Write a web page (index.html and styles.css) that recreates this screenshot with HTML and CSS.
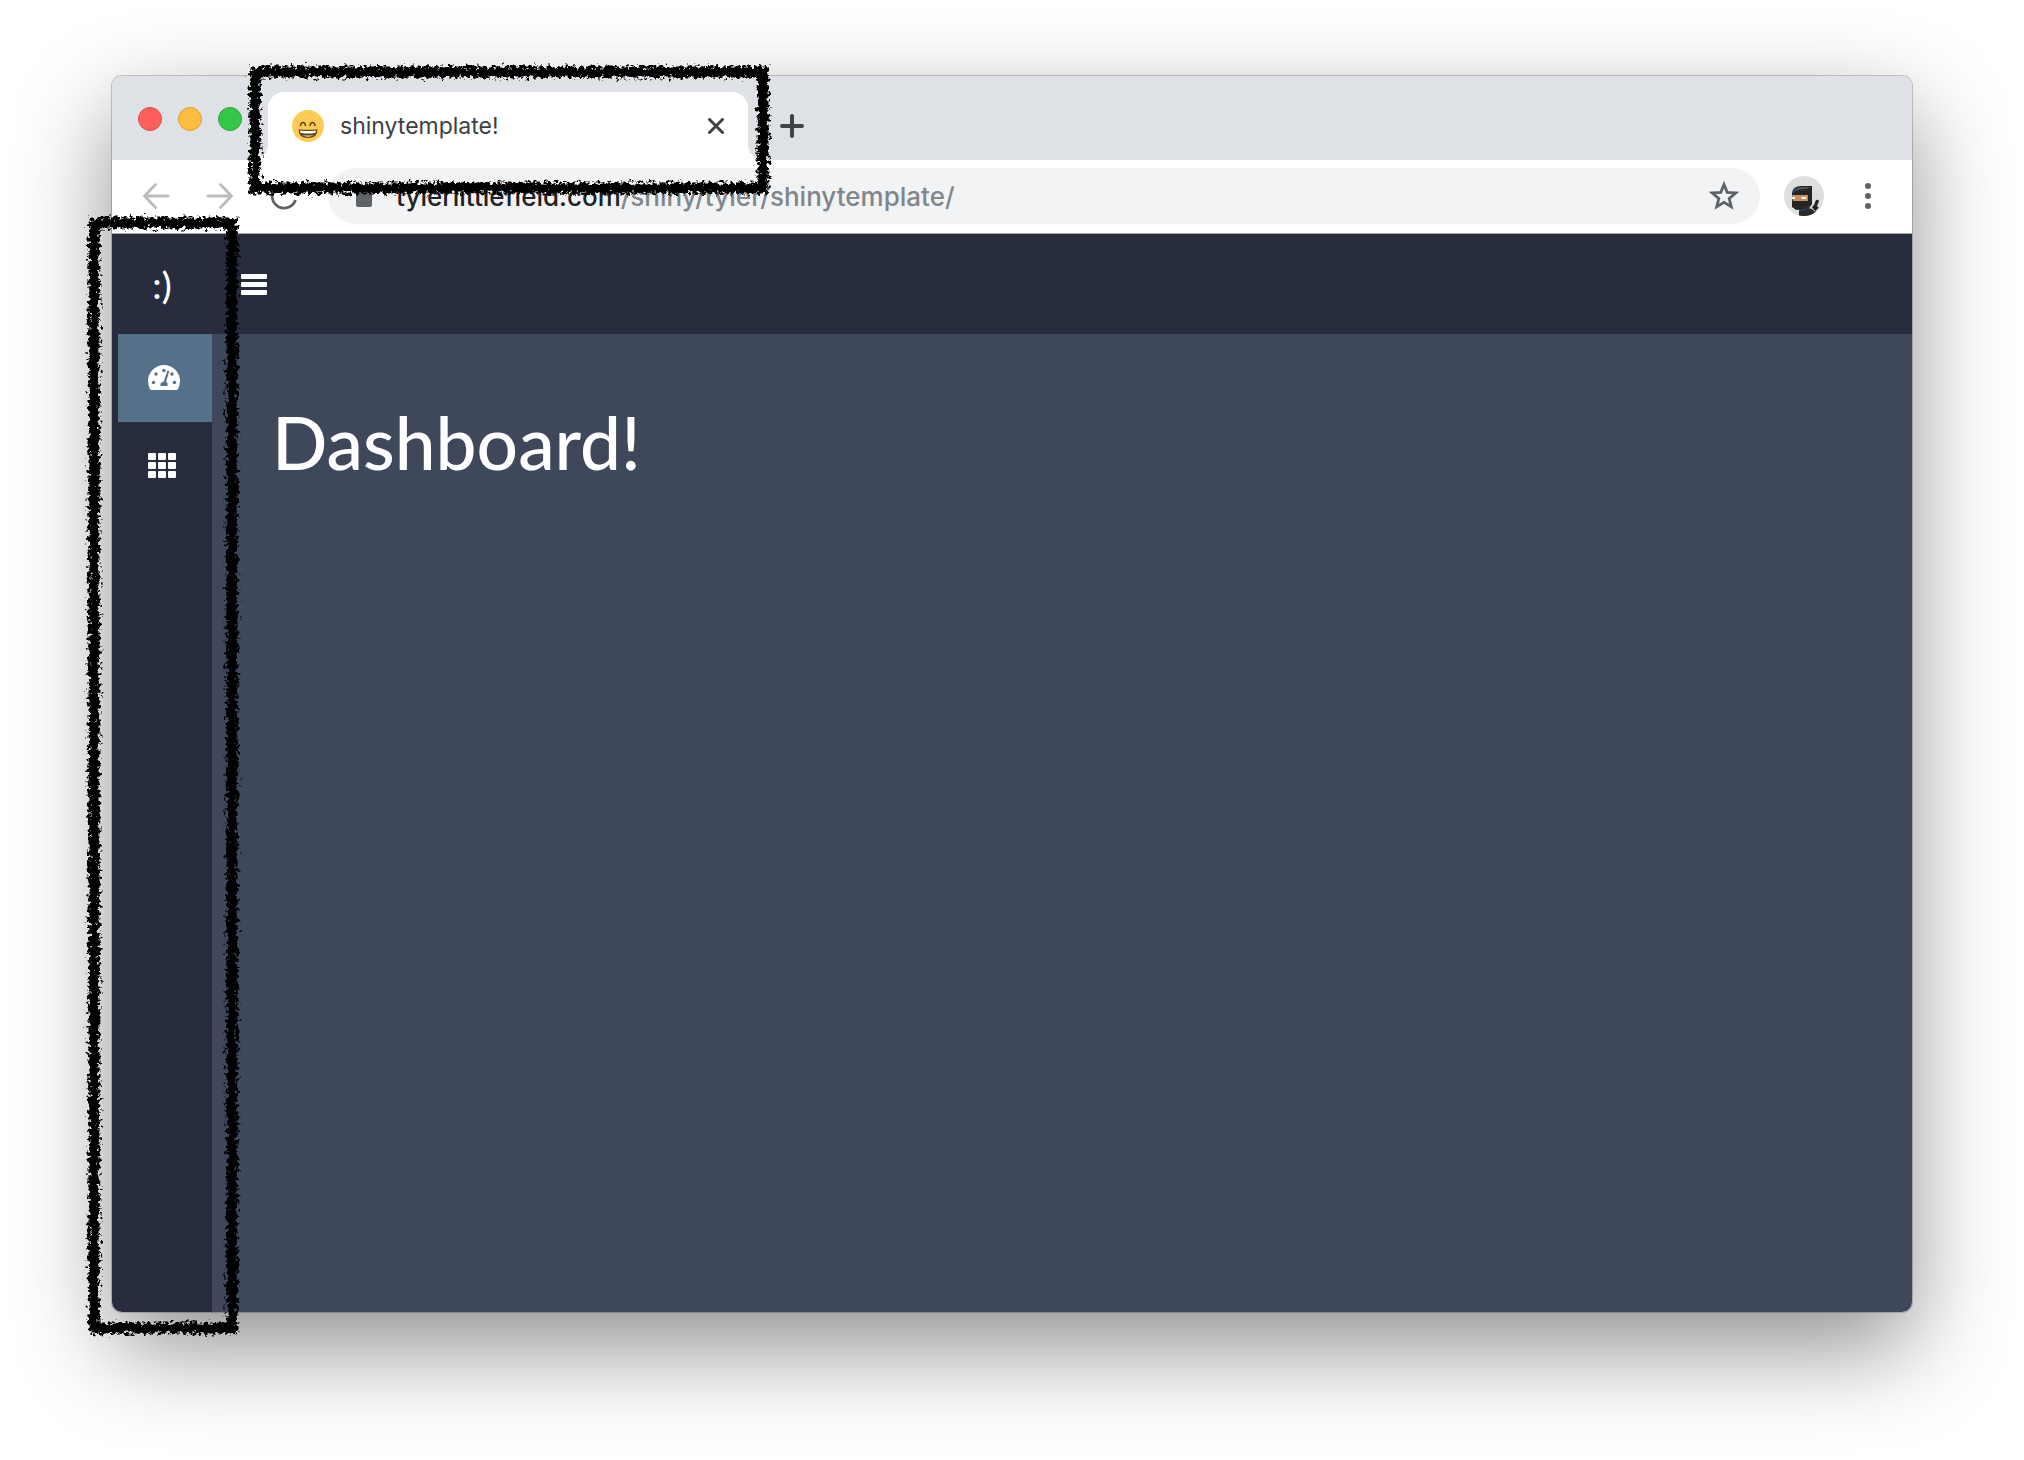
FILE: index.html
```html
<!DOCTYPE html>
<html lang="en">
<head>
<meta charset="utf-8">
<title>shinytemplate!</title>
<link rel="stylesheet" href="styles.css">
</head>
<body>
<svg class="defs" width="0" height="0" aria-hidden="true">
  <filter id="charcoal" filterUnits="userSpaceOnUse" x="-20" y="-20" width="2000" height="2000">
    <feTurbulence type="fractalNoise" baseFrequency="0.28" numOctaves="3" seed="4" result="noise"/>
    <feDisplacementMap in="SourceGraphic" in2="noise" scale="12" xChannelSelector="R" yChannelSelector="G"/>
  </filter>
</svg>
<div class="window">
  <header class="tabstrip">
    <div class="lights">
      <button class="light light-close" aria-label="Close window"></button>
      <button class="light light-min" aria-label="Minimize window"></button>
      <button class="light light-max" aria-label="Zoom window"></button>
    </div>
    <div class="tab">
      <svg class="favicon" viewBox="0 0 32 32" aria-hidden="true">
        <circle cx="16" cy="16" r="16" fill="#ffcb57"/>
        <path d="M8.5 15.500c.7-4 4.300-4 5 0M18 15.500c.7-4 4.300-4 5 0" fill="none" stroke="#664311" stroke-width="1.500" stroke-linecap="round"/>
        <path d="M6.500 19.200Q16 20.500 25.500 19.200Q25.500 28 16 28Q6.500 28 6.500 19.200Z" fill="#664311"/>
        <path d="M8 20.500Q16 21.700 24 20.500Q23.800 22.300 23 23Q16 24 9 23Q8.200 22 8 20.500Z" fill="#fff"/>
        <path d="M10.500 25Q16 26 21.500 25Q19.500 26.700 16 26.700Q12.500 26.700 10.500 25Z" fill="#f2e5cf"/>
      </svg>
      <span class="tab-title">shinytemplate!</span>
      <button class="icon-button tab-close" aria-label="Close tab">
        <svg width="16" height="16" viewBox="0 0 16 16"><path d="M1.500 1.500l13 13M14.500 1.500l-13 13" stroke="#3f4346" stroke-width="3" stroke-linecap="round"/></svg>
      </button>
    </div>
    <button class="icon-button new-tab" aria-label="New tab">
      <svg width="24" height="24" viewBox="0 0 24 24"><path d="M12 2v20M2 12h20" stroke="#3f4346" stroke-width="4" stroke-linecap="round"/></svg>
    </button>
    <div class="marker marker-tab"><svg aria-hidden="true"><rect width="100%" height="100%"/></svg></div>
  </header>
  <nav class="toolbar">
    <button class="icon-button" aria-label="Back">
      <svg width="32" height="32" viewBox="0 0 32 32"><path d="M28 16H4.500M15.500 4.500L4.500 16l11 11.500" fill="none" stroke="#babcbe" stroke-width="2.800" stroke-linecap="round"/></svg>
    </button>
    <button class="icon-button" aria-label="Forward">
      <svg width="32" height="32" viewBox="0 0 32 32"><path d="M4 16h23.500M16.500 4.500L27.500 16l-11 11.500" fill="none" stroke="#babcbe" stroke-width="2.800" stroke-linecap="round"/></svg>
    </button>
    <button class="icon-button" aria-label="Reload">
      <svg width="32" height="32" viewBox="0 0 32 32"><path d="M27.500 20A12 12 0 1 1 25 8l2 2M28 3v8h-8" fill="none" stroke="#5f6368" stroke-width="2.800"/></svg>
    </button>
    <div class="omnibox">
      <svg width="16" height="24" viewBox="0 0 16 24" aria-hidden="true"><rect y="8" width="16" height="15" rx="2" fill="#5f6368"/><path d="M4 9V6a4 4 0 0 1 8 0v3" fill="none" stroke="#5f6368" stroke-width="2"/></svg>
      <div class="address" role="textbox" contenteditable="true" spellcheck="false" aria-label="Address">tylerlittlefield.com<span class="path">/shiny/tyler/shinytemplate/</span></div>
      <button class="icon-button" aria-label="Bookmark this page">
        <svg width="32" height="32" viewBox="0 0 32 32"><path d="M16 4.500l3.200 7.900 8.600.6-6.600 5.500 2.100 8.300L16 22.300l-7.300 4.500 2.100-8.300L4.200 13l8.600-.6z" fill="none" stroke="#5f6368" stroke-width="2.800"/></svg>
      </button>
    </div>
    <button class="icon-button avatar" aria-label="Profile">
      <svg width="40" height="40" viewBox="0 0 40 40">
        <clipPath id="round"><circle cx="20" cy="20" r="20"/></clipPath>
        <g clip-path="url(#round)">
          <path d="M0 0h40v40H15V34L8 32H4L0 40z" fill="#dedede"/>
          <path d="M0 30l15 5v5H0z" fill="#dedede"/>
          <path d="M8 17Q9 10 17 10H28V28L24 34 12 34 8 31z" fill="#242424"/>
          <path d="M10 16Q12 11 18 11L27 11 22 13Q14 13 10 16z" fill="#555"/>
          <path d="M9 18Q9 12 15 11L10 17z" fill="#2f4a78"/>
          <path d="M8 19h16v6H9z" fill="#c79064"/>
          <path d="M8 21h3v2H8zM17 21h5v2h-4z" fill="#fff"/>
          <path d="M15 34l9-2 4 1 3 3-4 4H15z" fill="#292929"/>
          <path d="M13 33q7 4 13-4M29 37l3-2" stroke="#2f4a78" fill="none"/>
          <path d="M32 24q2-1 3 1l-2 5 2 2-2 1-1 2-2-1-2-3 2-2z" fill="#222"/>
        </g>
      </svg>
    </button>
    <button class="icon-button menu" aria-label="Menu">
      <svg width="8" height="28" viewBox="0 0 8 28"><g fill="#5f6368"><circle cx="4" cy="4" r="3"/><circle cx="4" cy="14" r="3"/><circle cx="4" cy="24" r="3"/></g></svg>
    </button>
  </nav>
  <div class="app">
    <aside class="sidebar">
      <a class="brand" href="#">:)</a>
      <a class="item item-active" href="#dashboard" aria-label="Dashboard">
        <svg width="32" height="26" viewBox="0 0 32 26"><path d="M16 0A16 16 0 0 0 0 16q0 4.500 2 8.200.6.800 1.600.8h24.800q1 0 1.600-.8 2-3.700 2-8.200A16 16 0 0 0 16 0z" fill="#fff"/><g fill="#557089"><circle cx="5.500" cy="17.500" r="1.700"/><circle cx="8" cy="9" r="1.700"/><circle cx="16" cy="5.500" r="1.700"/><circle cx="24" cy="9" r="1.700"/><circle cx="26.500" cy="17.500" r="1.700"/><path d="M19.500 5.500l1.800.6-3.300 11q2.500 1 1.300 3.900h-6.600q-1.300-3.600 3-4.300z"/></g></svg>
      </a>
      <a class="item" href="#widgets" aria-label="Widgets">
        <svg width="28" height="26" viewBox="0 0 28 26"><g fill="#fff"><rect width="8" height="7" rx="1"/><rect x="10" width="8" height="7" rx="1"/><rect x="20" width="8" height="7" rx="1"/><rect y="9" width="8" height="7" rx="1"/><rect x="10" y="9" width="8" height="7" rx="1"/><rect x="20" y="9" width="8" height="7" rx="1"/><rect y="18" width="8" height="7" rx="1"/><rect x="10" y="18" width="8" height="7" rx="1"/><rect x="20" y="18" width="8" height="7" rx="1"/></g></svg>
      </a>
    </aside>
    <div class="page">
      <div class="navbar">
        <button class="icon-button" aria-label="Toggle navigation">
          <svg width="26" height="22" viewBox="0 0 26 22"><g fill="#fff"><rect y="1" width="26" height="5" rx="1"/><rect y="9" width="26" height="5" rx="1"/><rect y="17" width="26" height="5" rx="1"/></g></svg>
        </button>
      </div>
      <main class="content"><h1>Dashboard!</h1></main>
    </div>
    <div class="marker marker-sidebar"><svg aria-hidden="true"><rect width="100%" height="100%"/></svg></div>
  </div>
</div>
</body>
</html>
```
FILE: styles.css
```css
* { box-sizing: border-box; }
body {
  margin: 0;
  min-height: 100vh;
  padding: 76px 112px 148px;
  display: flex;
  background: #fff;
  font-family: Inter, "Liberation Sans", sans-serif;
}
svg { display: block; flex: none; }
.defs { position: absolute; }
.window {
  flex: 1;
  min-width: 0;
  display: flex;
  flex-direction: column;
  border-radius: 10px;
  background: #fff;
  box-shadow: 0 0 0 1px rgba(0, 0, 0, .2), 0 36px 96px rgba(0, 0, 0, .44);
}
.icon-button {
  display: flex;
  align-items: center;
  justify-content: center;
  padding: 0;
  border: 0;
  background: none;
}

.tabstrip {
  position: relative;
  display: flex;
  align-items: flex-end;
  height: 84px;
  padding-left: 26px;
  border-radius: 10px 10px 0 0;
  background: #dee1e6;
}
.lights { display: flex; gap: 16px; padding-top: 2px; align-self: center; margin-right: 26px; }
.light { width: 24px; height: 24px; padding: 0; border: 1px solid; border-radius: 50%; }
.light-close { background: #fe5f58; border-color: #e24c46; }
.light-min { background: #febc40; border-color: #dfa033; }
.light-max { background: #33c748; border-color: #27a938; }
.tab {
  position: relative;
  display: flex;
  align-items: center;
  gap: 16px;
  width: 480px;
  height: 68px;
  padding: 0 24px;
  border-radius: 16px 16px 0 0;
  background: #fff;
}
.tab::before, .tab::after {
  content: "";
  position: absolute;
  bottom: 0;
  width: 16px;
  height: 16px;
}
.tab::before { right: 100%; background: radial-gradient(circle at 0 0, transparent 16px, #fff 16px); }
.tab::after { left: 100%; background: radial-gradient(circle at 100% 0, transparent 16px, #fff 16px); }
.favicon { width: 32px; height: 32px; }
.tab-title { flex: 1; font-size: 23px; color: #3c4043; }
.new-tab { width: 48px; height: 68px; margin-left: 20px; }

.toolbar {
  display: flex;
  align-items: center;
  gap: 32px;
  height: 74px;
  padding: 0 40px 2px 28px;
  border-bottom: 1px solid #a9abab;
}
.omnibox {
  flex: 1;
  display: flex;
  align-items: center;
  gap: 24px;
  height: 56px;
  margin-right: -8px;
  margin-left: -4px;
  padding: 0 20px 0 28px;
  border-radius: 28px;
  background: #f1f3f4;
}
.address { flex: 1; padding-top: 2px; font-size: 26px; font-weight: 500; color: #202124; white-space: nowrap; }
.path { color: #80868b; }
.menu { margin-left: 8px; }

.app { position: relative; flex: 1; display: flex; }
.sidebar {
  width: 100px;
  background: #272c3f;
  border-radius: 0 0 0 10px;
}
.brand {
  display: flex;
  align-items: center;
  justify-content: center;
  height: 100px;
  font: 500 37px Lato, sans-serif;
  color: #fff;
  text-decoration: none;
}
.item {
  display: flex;
  align-items: center;
  height: 88px;
  margin-left: 6px;
  padding-left: 30px;
}
.item-active { background: #557089; }
.page { flex: 1; display: flex; flex-direction: column; }
.navbar {
  display: flex;
  align-items: center;
  height: 100px;
  padding-left: 29px;
  background: #272c3f;
}
.content {
  flex: 1;
  padding: 64px 60px;
  background: #3f475a;
  border-radius: 0 0 10px 0;
}
h1 { margin: 0; font: 500 73px/88px Lato, sans-serif; color: #fff; }

.marker { position: absolute; z-index: 1; pointer-events: none; }
.marker svg { width: 100%; height: 100%; overflow: visible; }
.marker rect { fill: none; stroke: #000; stroke-width: 11px; filter: url(#charcoal); }
.marker-tab { left: 143px; top: -4px; width: 508px; height: 116px; }
.marker-sidebar { left: -18px; top: -11px; bottom: -16px; width: 138px; }
```
